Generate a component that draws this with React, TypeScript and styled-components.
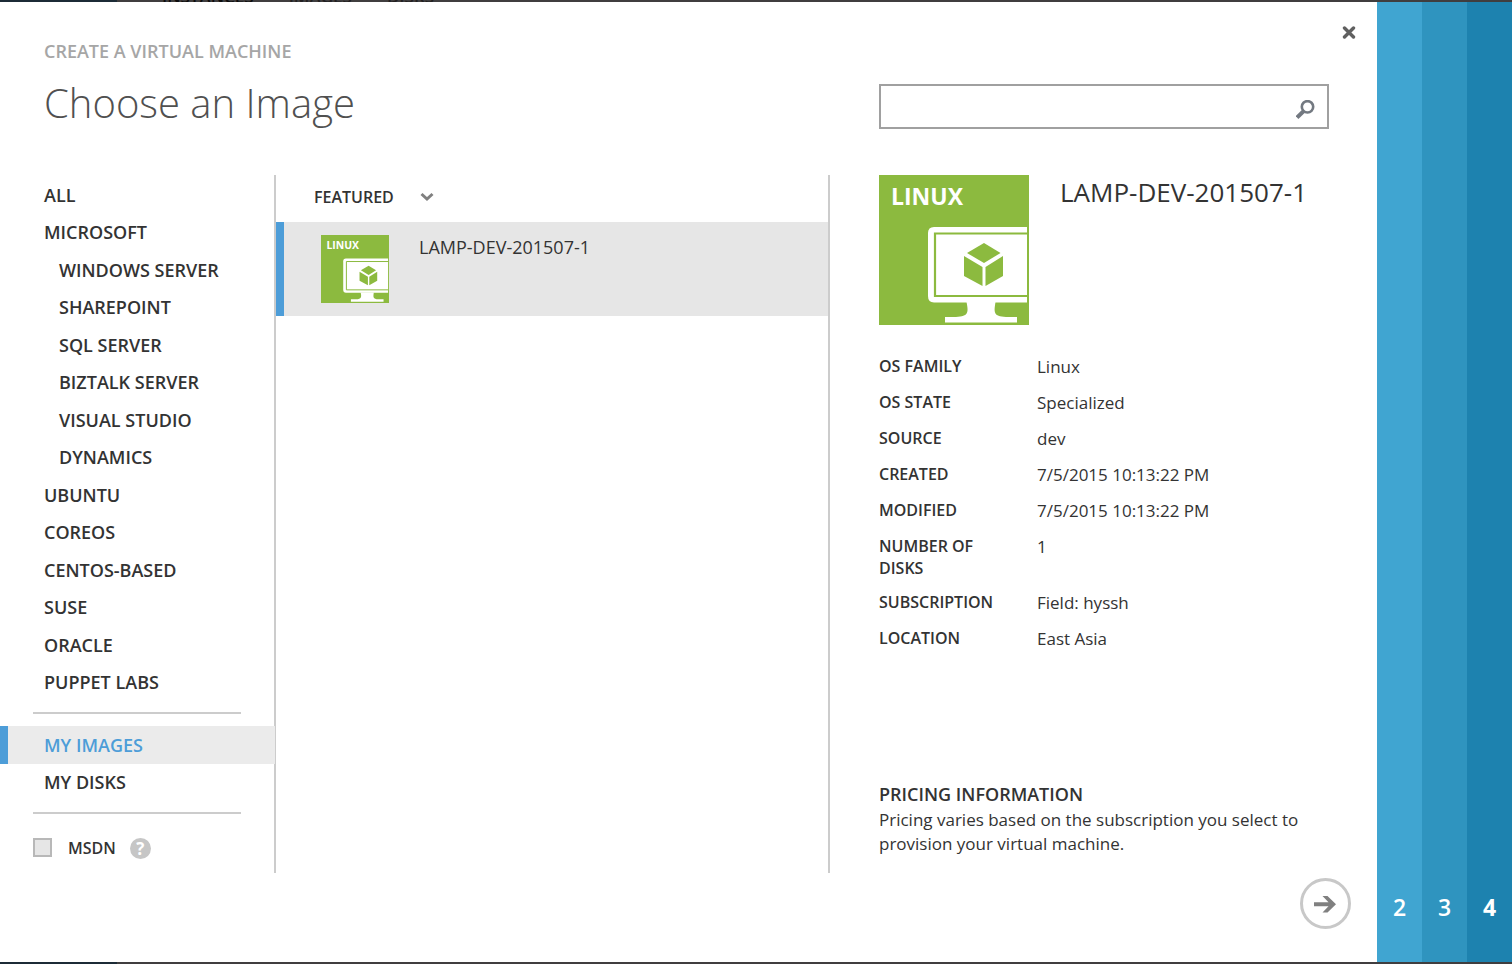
import React from "react";
import styled, { createGlobalStyle } from "styled-components";

const ink = "#333333";
const accent = "#4d9dd8";
const rule = "#cccccc";
const green = "#8cba3f";

const GlobalStyle = createGlobalStyle`
  *, *::before, *::after { box-sizing: border-box; }
  html, body { margin: 0; padding: 0; }
  body {
    background: linear-gradient(to right, #1c2b36 117px, #403e3f 117px);
    color: ${ink};
    font-family: "Open Sans", "Noto Sans", sans-serif;
    font-size: 17px;
    line-height: 24px;
  }
  button, input, select { font: inherit; color: inherit; }
  h1, h2, h3, p, ul, dl, dd { margin: 0; padding: 0; }
`;

const Page = styled.div`
  display: flex;
  flex-direction: column;
  min-height: 100vh;
`;

const Backdrop = styled.div`
  display: flex;
  align-items: flex-end;
  gap: 35px;
  height: 2px;
  padding-left: 162px;
  overflow: hidden;
  color: #222021;
  font-size: 17px;
  font-weight: 600;
  line-height: 10px;

  span:first-child { color: #0c0c0c; }
`;

const Wizard = styled.div`
  display: flex;
  flex: 1;
  margin-bottom: 2px;
`;

const Dialog = styled.main`
  display: flex;
  flex: 1;
  flex-direction: column;
  min-width: 0;
  background: #ffffff;
`;

const TopRow = styled.div`
  display: flex;
  align-items: flex-start;
  justify-content: space-between;
  padding: 14px 12px 0 44px;
`;

const Eyebrow = styled.p`
  margin-top: 23px;
  color: #a6a6a6;
  font-size: 18px;
  font-weight: 600;
`;

const CloseButton = styled.button`
  display: grid;
  place-items: center;
  width: 32px;
  height: 32px;
  padding: 0;
  border: 0;
  background: none;
  cursor: pointer;
`;

const TitleRow = styled.div`
  display: flex;
  align-items: flex-start;
  justify-content: space-between;
  margin: 21px 48px 46px 44px;
`;

const Title = styled.h1`
  color: #505050;
  font-size: 40px;
  font-weight: 300;
  line-height: 38px;
`;

const SearchBox = styled.form`
  display: flex;
  align-items: center;
  width: 450px;
  height: 45px;
  padding-right: 12px;
  border: 2px solid #a0a0a0;
`;

const SearchInput = styled.input`
  flex: 1;
  min-width: 0;
  height: 100%;
  padding: 0 12px;
  border: 0;
  outline: 0;
  background: transparent;
`;

const SearchButton = styled.button`
  display: flex;
  padding: 5px 0 0;
  border: 0;
  background: none;
  cursor: pointer;
`;

const Body = styled.div`
  display: grid;
  flex: 1;
  grid-template-columns: 276px minmax(0, 1fr) 547px;
`;

const Sidebar = styled.nav`
  padding-top: 1px;
  border-right: 2px solid ${rule};
`;

const NavList = styled.ul<{ $height: number }>`
  display: grid;
  grid-auto-rows: 1fr;
  height: ${(p) => p.$height}px;
  list-style: none;
`;

const NavItem = styled.li<{ $active?: boolean }>`
  display: flex;
  margin-right: ${(p) => (p.$active ? "-1px" : "0")};
  border-left: 8px solid ${(p) => (p.$active ? accent : "transparent")};
  background: ${(p) => (p.$active ? "#ebebeb" : "transparent")};
`;

const NavLink = styled.a<{ $nested?: boolean; $active?: boolean }>`
  display: flex;
  flex: 1;
  align-items: center;
  padding-left: ${(p) => (p.$nested ? 51 : 36)}px;
  color: ${(p) => (p.$active ? accent : ink)};
  font-size: 18px;
  font-weight: 600;
  text-decoration: none;
`;

const Divider = styled.hr`
  height: 2px;
  margin: 11px 33px 12px;
  border: 0;
  background: ${rule};
`;

const MsdnRow = styled.div`
  display: flex;
  align-items: center;
  gap: 14px;
  margin: 22px 0 0 33px;
`;

const CheckLabel = styled.label`
  display: flex;
  align-items: center;
  gap: 16px;
  font-size: 16px;
  font-weight: 600;
`;

const Checkbox = styled.input`
  appearance: none;
  width: 19px;
  height: 19px;
  margin: 0 0 2px;
  border: 2px solid #b8b8b8;
  background: #e6e6e6;
`;

const HelpButton = styled.button`
  width: 21px;
  height: 21px;
  padding: 0;
  border: 0;
  border-radius: 50%;
  background: #c6c6c6;
  color: #ffffff;
  font-weight: 700;
  line-height: 21px;
`;

const Images = styled.section`
  border-right: 2px solid ${rule};
`;

const FilterBar = styled.div`
  display: flex;
  align-items: center;
  height: 47px;
  padding: 0 0 4px 38px;
`;

const FilterSelect = styled.select`
  appearance: none;
  width: 106px;
  padding: 0;
  border: 0;
  background: none;
  font-size: 16px;
  font-weight: 600;
  line-height: 24px;
`;

const FilterWrap = styled.label`
  display: grid;
  grid-template-columns: 106px 14px;
  align-items: center;

  svg { pointer-events: none; }
`;

const ImageRow = styled.button`
  display: flex;
  gap: 30px;
  width: 100%;
  height: 94px;
  padding: 13px 0 0 37px;
  border: 0;
  border-left: 8px solid ${accent};
  background: #e6e6e6;
  font-size: 18px;
  text-align: left;
`;

const Details = styled.section`
  display: flex;
  flex-direction: column;
  padding: 0 48px 17px 49px;
`;

const Summary = styled.header`
  display: flex;
  gap: 31px;
  margin-bottom: 24px;
`;

const ImageName = styled.h2`
  font-size: 26px;
  font-weight: 400;
  line-height: 34px;
`;

const Facts = styled.dl`
  display: flex;
  flex-direction: column;
`;

const Fact = styled.div`
  display: grid;
  grid-template-columns: 158px 1fr;
  min-height: 36px;
  padding: 6px 0;

  dt {
    width: 120px;
    font-size: 16px;
    font-weight: 600;
    line-height: 22px;
  }
`;

const Pricing = styled.div`
  margin-top: auto;

  h3 {
    font-size: 18px;
    font-weight: 600;
    line-height: 28px;
  }
`;

const Footer = styled.footer`
  display: flex;
  justify-content: flex-end;
  padding: 5px 26px 33px;
`;

const NextButton = styled.button`
  display: grid;
  place-items: center;
  width: 51px;
  height: 51px;
  padding: 0;
  border: 3px solid #c8c8c8;
  border-radius: 50%;
  background: none;
  cursor: pointer;
`;

const Steps = styled.aside`
  display: flex;
`;

const Step = styled.button<{ $tone: string; $strong?: boolean }>`
  display: flex;
  align-items: flex-end;
  justify-content: center;
  width: 45px;
  padding: 0 0 39px;
  border: 0;
  background: ${(p) => p.$tone};
  color: #ffffff;
  font-size: 23px;
  font-weight: ${(p) => (p.$strong ? 700 : 600)};
  line-height: 32px;
`;

function LinuxTile({ size }: { size: number }) {
  return (
    <svg width={size} height={size} viewBox="0 0 150 150" role="img" aria-label="Linux image">
      <rect width="150" height="150" fill={green} />
      <text x="12" y="30" fill="#fff" fontSize="23" fontWeight="700" fontFamily="Open Sans, sans-serif">
        LINUX
      </text>
      <path d="M148 52H55Q49 52 49 58V121Q49 127.500 55 127.500H148Z" fill="#fff" />
      <path d="M148 58.500H56V121H148" fill="none" stroke={green} strokeWidth="2.200" />
      <path d="M105 68L121.500 78L105 88L88 78Z" fill={green} />
      <path d="M85 81L103.500 92V111L85 101ZM124 81L106.500 92V111L124 101Z" fill={green} />
      <path
        d="M87.500 127H116.500C115 137 114 141.500 127 142H138V147.500H66V142H77C90 141.500 89.500 137 87.500 127Z"
        fill="#fff"
      />
    </svg>
  );
}

type Category = { label: string; nested?: boolean; active?: boolean };

const categories: Category[] = [
  { label: "ALL" },
  { label: "MICROSOFT" },
  { label: "WINDOWS SERVER", nested: true },
  { label: "SHAREPOINT", nested: true },
  { label: "SQL SERVER", nested: true },
  { label: "BIZTALK SERVER", nested: true },
  { label: "VISUAL STUDIO", nested: true },
  { label: "DYNAMICS", nested: true },
  { label: "UBUNTU" },
  { label: "COREOS" },
  { label: "CENTOS-BASED" },
  { label: "SUSE" },
  { label: "ORACLE" },
  { label: "PUPPET LABS" },
];

const personal: Category[] = [{ label: "MY IMAGES", active: true }, { label: "MY DISKS" }];

const facts: [string, string][] = [
  ["OS FAMILY", "Linux"],
  ["OS STATE", "Specialized"],
  ["SOURCE", "dev"],
  ["CREATED", "7/5/2015 10:13:22 PM"],
  ["MODIFIED", "7/5/2015 10:13:22 PM"],
  ["NUMBER OF DISKS", "1"],
  ["SUBSCRIPTION", "Field: hyssh"],
  ["LOCATION", "East Asia"],
];

function Categories({ items, height }: { items: Category[]; height: number }) {
  return (
    <NavList $height={height}>
      {items.map((item) => (
        <NavItem key={item.label} $active={item.active}>
          <NavLink href="#" $nested={item.nested} $active={item.active}>
            {item.label}
          </NavLink>
        </NavItem>
      ))}
    </NavList>
  );
}

export default function App() {
  return (
    <Page>
      <GlobalStyle />
      <Backdrop aria-hidden="true">
        <span>INSTANCES</span>
        <span>IMAGES</span>
        <span>DISKS</span>
      </Backdrop>
      <Wizard>
        <Dialog>
          <TopRow>
            <Eyebrow>CREATE A VIRTUAL MACHINE</Eyebrow>
            <CloseButton aria-label="Close">
              <svg width="14" height="14" viewBox="0 0 14 14" fill="none" stroke="#606060" strokeWidth="3.400" strokeLinecap="round">
                <path d="M2.500 3L11.500 12M11.500 3L2.500 12" />
              </svg>
            </CloseButton>
          </TopRow>
          <TitleRow>
            <Title>Choose an Image</Title>
            <SearchBox role="search">
              <SearchInput type="text" aria-label="Search images" />
              <SearchButton type="button" aria-label="Search">
                <svg width="19" height="19" viewBox="0 0 19 19" fill="none" stroke="#737981">
                  <ellipse cx="11.500" cy="6.800" rx="5.700" ry="5.700" strokeWidth="2.600" />
                  <path d="M7.500 11.200L1 17.500" strokeWidth="4" />
                </svg>
              </SearchButton>
            </SearchBox>
          </TitleRow>
          <Body>
            <Sidebar>
              <Categories items={categories} height={525} />
              <Divider />
              <Categories items={personal} height={75} />
              <Divider />
              <MsdnRow>
                <CheckLabel>
                  <Checkbox type="checkbox" />
                  MSDN
                </CheckLabel>
                <HelpButton aria-label="About MSDN images">?</HelpButton>
              </MsdnRow>
            </Sidebar>
            <Images>
              <FilterBar>
                <FilterWrap>
                  <FilterSelect aria-label="Filter">
                    <option>FEATURED</option>
                  </FilterSelect>
                  <svg width="14" height="10" viewBox="0 0 14 10" fill="none" stroke="#808080" strokeWidth="3">
                    <path d="M1.500 2L7 7L12.500 2" />
                  </svg>
                </FilterWrap>
              </FilterBar>
              <ImageRow>
                <LinuxTile size={68} />
                <span>LAMP-DEV-201507-1</span>
              </ImageRow>
            </Images>
            <Details>
              <Summary>
                <LinuxTile size={150} />
                <ImageName>LAMP-DEV-201507-1</ImageName>
              </Summary>
              <Facts>
                {facts.map(([name, value]) => (
                  <Fact key={name}>
                    <dt>{name}</dt>
                    <dd>{value}</dd>
                  </Fact>
                ))}
              </Facts>
              <Pricing>
                <h3>PRICING INFORMATION</h3>
                <p>Pricing varies based on the subscription you select to provision your virtual machine.</p>
              </Pricing>
            </Details>
          </Body>
          <Footer>
            <NextButton aria-label="Next">
              <svg width="23" height="18" viewBox="0 0 23 18" fill="#808080">
                <path d="M0 7.200H14.500L8.500 1H13.500L22 9.200L13.500 17.500H8.500L14.500 11.200H0Z" />
              </svg>
            </NextButton>
          </Footer>
        </Dialog>
        <Steps>
          <Step $tone="#40a5d1">2</Step>
          <Step $tone="#2f94bf">3</Step>
          <Step $tone="#1d82af" $strong>4</Step>
        </Steps>
      </Wizard>
    </Page>
  );
}
